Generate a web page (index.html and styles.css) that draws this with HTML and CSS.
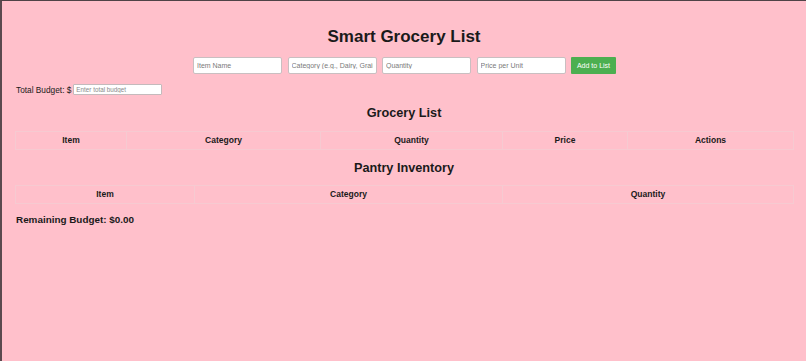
FILE: index.html
```html
<!DOCTYPE html>
<html lang="en">
<head>
    <meta charset="UTF-8">
    <meta name="viewport" content="width=device-width, initial-scale=1.0">
    <title>Smart Grocery List</title>
    <link rel="stylesheet" href="styles.css">
</head>
<body>

    <h1>Smart Grocery List</h1>

    <div class="add-form">
        <input type="text" class="field" placeholder="Item Name">
        <input type="text" class="field" placeholder="Category (e.g., Dairy, Grains)">
        <input type="number" class="field" placeholder="Quantity">
        <input type="number" class="field" placeholder="Price per Unit">
        <button class="add-btn">Add to List</button>
    </div>

    <div class="budget">
        <label for="budget">Total Budget: $</label>
        <input type="number" id="budget" class="budget-input" placeholder="Enter total budget">
    </div>

    <h2 class="list-title">Grocery List</h2>
    <table class="list">
        <colgroup>
            <col class="col-item">
            <col class="col-category">
            <col class="col-quantity">
            <col class="col-price">
            <col class="col-actions">
        </colgroup>
        <thead>
            <tr>
                <th>Item</th>
                <th>Category</th>
                <th>Quantity</th>
                <th>Price</th>
                <th>Actions</th>
            </tr>
        </thead>
        <tbody></tbody>
    </table>

    <h2 class="pantry-title">Pantry Inventory</h2>
    <table class="pantry">
        <colgroup>
            <col class="col-item">
            <col class="col-category">
            <col class="col-quantity">
        </colgroup>
        <thead>
            <tr>
                <th>Item</th>
                <th>Category</th>
                <th>Quantity</th>
            </tr>
        </thead>
        <tbody></tbody>
    </table>

    <h3 class="remaining">Remaining Budget: $0.00</h3>

</body>
</html>
```

FILE: styles.css
```css
html {
    box-sizing: border-box;
    min-height: 100%;
    border-top: 1px solid #4f4246;
    border-left: 2px solid #5a4a4f;
}
body {
    margin: 0;
    padding: 0 13px 0 13px;
    font-family: "Liberation Sans", Arial, sans-serif;
    font-size: 8.5px;
    background-color: #ffc0cb;
    color: #1a1a1a;
}
h1 {
    font-size: 17px;
    line-height: 20px;
    text-align: center;
    margin: 26px 0 10px;
}
h2 {
    font-size: 12.7px;
    line-height: 15px;
    text-align: center;
}
.list-title {
    margin: 11px 0 10px;
}
.pantry-title {
    margin: 11px 0 9px;
}
.add-form {
    display: flex;
    justify-content: center;
    gap: 5.5px;
    padding-left: 1px;
}
.field {
    box-sizing: border-box;
    width: 89px;
    height: 17px;
    padding: 0 3px;
    font-family: "Liberation Sans", Arial, sans-serif;
    font-size: 7px;
    border: 1px solid #c9bfc1;
    border-radius: 2px;
    background: white;
    -moz-appearance: textfield;
}
.field::placeholder {
    color: #7a7a7a;
}
.field::-webkit-outer-spin-button,
.field::-webkit-inner-spin-button,
.budget-input::-webkit-outer-spin-button,
.budget-input::-webkit-inner-spin-button {
    -webkit-appearance: none;
    margin: 0;
}
.add-btn {
    box-sizing: border-box;
    width: 45px;
    height: 17px;
    padding: 0;
    font-family: "Liberation Sans", Arial, sans-serif;
    font-size: 7px;
    color: white;
    background-color: #4caf50;
    border: none;
    border-radius: 1px;
    cursor: pointer;
}
.budget {
    display: flex;
    align-items: center;
    gap: 2px;
    margin-top: 10px;
    padding-left: 1px;
    font-size: 8.3px;
    line-height: 10px;
}
.budget-input {
    box-sizing: border-box;
    width: 89px;
    height: 11px;
    padding: 0 2px;
    font-family: "Liberation Sans", Arial, sans-serif;
    font-size: 6.3px;
    border: 1px solid #c4babc;
    border-radius: 1px;
    background: white;
}
.budget-input::placeholder {
    color: #8a8a8a;
}
table {
    width: 100%;
    border-collapse: collapse;
    table-layout: fixed;
}
th {
    font-size: 8.5px;
    line-height: 9px;
    padding: 4px 0;
    border: 1px solid #f6cad1;
}
.list .col-item { width: 111px; }
.list .col-category { width: 194px; }
.list .col-quantity { width: 182px; }
.list .col-price { width: 125px; }
.list .col-actions { width: 166px; }
.pantry .col-item { width: 179px; }
.pantry .col-category { width: 308px; }
.pantry .col-quantity { width: 291px; }
.remaining {
    font-size: 9.9px;
    line-height: 12px;
    margin: 10px 0 0 1px;
}
```
